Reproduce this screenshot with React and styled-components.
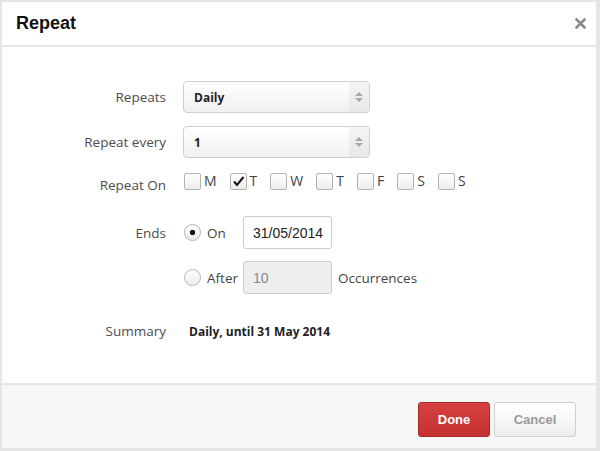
import React from 'react'
import styled, { createGlobalStyle } from 'styled-components'

const GlobalStyle = createGlobalStyle`
  body {
    margin: 0;
    background: #e6e6e6;
    font-family: "Open Sans", "Liberation Sans", sans-serif;
  }
`

const days = [
  { key: 'mon', label: 'M' },
  { key: 'tue', label: 'T', checked: true },
  { key: 'wed', label: 'W' },
  { key: 'thu', label: 'T' },
  { key: 'fri', label: 'F' },
  { key: 'sat', label: 'S' },
  { key: 'sun', label: 'S' },
]

const App = () => {
  return (
    <>
      <GlobalStyle />
      <Dialog>
        <Header>
          <Title>Repeat</Title>
          <Close aria-label="close">
            <svg width="11" height="11" viewBox="0 0 11 11">
              <path d="M1.5 1.5 L9.5 9.5 M9.5 1.5 L1.5 9.5" stroke="#8a8a8a" strokeWidth="2.6" strokeLinecap="square" />
            </svg>
          </Close>
        </Header>

        <Body>
          <Row $mt={34}>
            <Label>Repeats</Label>
            <Select>
              <span>Daily</span>
              <Arrows><Up /><Down /></Arrows>
            </Select>
          </Row>

          <Row $mt={13}>
            <Label>Repeat every</Label>
            <Select>
              <span>1</span>
              <Arrows><Up /><Down /></Arrows>
            </Select>
          </Row>

          <Row $mt={14} $h={18}>
            <Label $shift={4}>Repeat On</Label>
            <Days>
              {days.map((d) => (
                <Day key={d.key}>
                  <Box>
                    {d.checked && (
                      <svg width="13" height="13" viewBox="0 0 13 13">
                        <path d="M2 6.5 L5 10 L11.5 2" fill="none" stroke="#111" strokeWidth="2" />
                      </svg>
                    )}
                  </Box>
                  {d.label}
                </Day>
              ))}
            </Days>
          </Row>

          <Row $mt={26}>
            <Label>Ends</Label>
            <Choice>
              <Radio $on />
              On
            </Choice>
            <TextInput>31/05/2014</TextInput>
          </Row>

          <Row $mt={12}>
            <Label />
            <Choice>
              <Radio />
              After
            </Choice>
            <TextInput $disabled>10</TextInput>
            <After>Occurrences</After>
          </Row>

          <Row $mt={28}>
            <Label>Summary</Label>
            <Summary>Daily, until 31 May 2014</Summary>
          </Row>
        </Body>

        <Footer>
          <Button $primary>Done</Button>
          <Button>Cancel</Button>
        </Footer>
      </Dialog>
    </>
  )
}

export default App

const Dialog = styled.div`
  width: 594px;
  height: 446px;
  margin: 2px 0 0 2px;
  display: flex;
  flex-direction: column;
  gap: 2px;
  background: #e6e6e6;
`

const Header = styled.div`
  height: 43px;
  flex: none;
  background: #fff;
  display: flex;
  align-items: center;
  justify-content: space-between;
  padding: 0 10px 0 14px;
`

const Title = styled.div`
  font-family: "Liberation Sans", Arial, sans-serif;
  font-weight: bold;
  font-size: 18px;
  color: #111;
`

const Close = styled.div`
  width: 11px;
  height: 11px;
  display: flex;
`

const Body = styled.div`
  flex: 1;
  background: #fff;
  display: flex;
  flex-direction: column;
`

const Row = styled.div`
  display: flex;
  align-items: center;
  margin-top: ${(p) => p.$mt}px;
  height: ${(p) => (p.$h ? `${p.$h}px` : 'auto')};
`

const Label = styled.div`
  width: 164px;
  flex: none;
  text-align: right;
  margin-right: 17px;
  font-size: 13.5px;
  color: #4d4d4d;
  position: relative;
  top: ${(p) => p.$shift || 0}px;
`

const Select = styled.div`
  width: 187px;
  height: 32px;
  box-sizing: border-box;
  border: 1px solid #cfcfcf;
  border-radius: 4px;
  background: linear-gradient(#ffffff, #f0f0f0);
  display: flex;
  align-items: center;
  justify-content: space-between;
  padding-left: 10px;
  font-size: 12px;
  font-weight: bold;
  color: #222;
  overflow: hidden;
`

const Arrows = styled.div`
  width: 20px;
  align-self: stretch;
  background: linear-gradient(#f4f4f4, #e8e8e8);
  display: flex;
  flex-direction: column;
  align-items: center;
  justify-content: center;
  gap: 2px;
`

const Up = styled.span`
  width: 0;
  height: 0;
  border-left: 4px solid transparent;
  border-right: 4px solid transparent;
  border-bottom: 4px solid #a8a8a8;
`

const Down = styled.span`
  width: 0;
  height: 0;
  border-left: 4px solid transparent;
  border-right: 4px solid transparent;
  border-top: 4px solid #a8a8a8;
`

const Days = styled.div`
  display: flex;
  align-items: center;
  padding-left: 1px;
`

const Day = styled.label`
  display: flex;
  align-items: center;
  gap: 3px;
  margin-right: 13px;
  font-size: 14px;
  line-height: 18px;
  color: #444;
`

const Box = styled.span`
  width: 17px;
  height: 17px;
  box-sizing: border-box;
  border: 1px solid #b3b3b3;
  border-radius: 2px;
  background: linear-gradient(#ffffff, #ededed);
  display: flex;
  align-items: center;
  justify-content: center;
`

const Choice = styled.label`
  width: 59px;
  flex: none;
  display: flex;
  align-items: center;
  gap: 6px;
  padding-left: 1px;
  font-size: 13.5px;
  color: #444;
`

const Radio = styled.span`
  width: 17px;
  height: 17px;
  box-sizing: border-box;
  border: 1px solid #b3b3b3;
  border-radius: 50%;
  background: ${(p) =>
    p.$on
      ? 'radial-gradient(circle, #111 0 2.5px, transparent 3px), linear-gradient(#ffffff, #ececec)'
      : 'linear-gradient(#ffffff, #ececec)'};
`

const TextInput = styled.div`
  width: 89px;
  height: 33px;
  box-sizing: border-box;
  border: 1px solid #cccccc;
  border-radius: 3px;
  background: ${(p) => (p.$disabled ? '#eeeeee' : '#fff')};
  color: ${(p) => (p.$disabled ? '#888' : '#222')};
  display: flex;
  align-items: center;
  padding-left: 9px;
  font-family: "Liberation Sans", Arial, sans-serif;
  font-size: 14px;
`

const After = styled.span`
  margin-left: 6px;
  font-size: 13.5px;
  color: #444;
`

const Summary = styled.div`
  margin-left: 6px;
  font-size: 12px;
  font-weight: bold;
  color: #222;
`

const Footer = styled.div`
  height: 63px;
  flex: none;
  box-sizing: border-box;
  background: #f7f7f7;
  display: flex;
  justify-content: flex-end;
  align-items: flex-start;
  gap: 4px;
  padding: 17px 20px 0 0;
`

const Button = styled.div`
  width: ${(p) => (p.$primary ? 72 : 82)}px;
  height: 35px;
  box-sizing: border-box;
  border-radius: 3px;
  border: 1px solid ${(p) => (p.$primary ? '#a92a2a' : '#cfcfcf')};
  background: ${(p) =>
    p.$primary ? 'linear-gradient(#d64141, #c53232)' : 'linear-gradient(#ffffff, #eeeeee)'};
  color: ${(p) => (p.$primary ? '#fff' : '#9a9a9a')};
  display: flex;
  align-items: center;
  justify-content: center;
  font-family: "Liberation Sans", Arial, sans-serif;
  font-weight: bold;
  font-size: 13px;
`
